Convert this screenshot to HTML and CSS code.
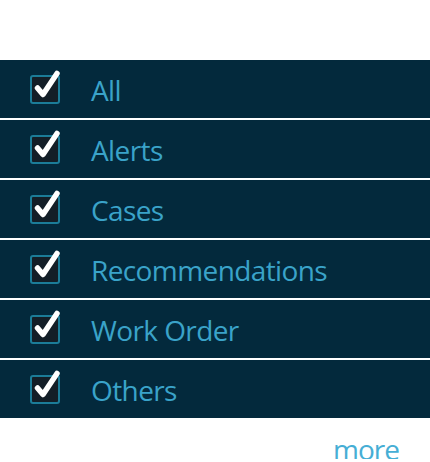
FILE: index.html
```html
<!DOCTYPE html>
<html>
<head>
<meta charset="utf-8">
<link rel="stylesheet" href="styles.css">
</head>
<body>
<div class="panel">
  <ul class="list">
    <li class="row"><span class="box"><svg viewBox="0 0 30 30" class="tick"><path d="M7.5 13 L13 19.5 L27 -1.5" /></svg></span><span class="label">All</span></li>
    <li class="row"><span class="box"><svg viewBox="0 0 30 30" class="tick"><path d="M7.5 13 L13 19.5 L27 -1.5" /></svg></span><span class="label">Alerts</span></li>
    <li class="row"><span class="box"><svg viewBox="0 0 30 30" class="tick"><path d="M7.5 13 L13 19.5 L27 -1.5" /></svg></span><span class="label">Cases</span></li>
    <li class="row"><span class="box"><svg viewBox="0 0 30 30" class="tick"><path d="M7.5 13 L13 19.5 L27 -1.5" /></svg></span><span class="label">Recommendations</span></li>
    <li class="row"><span class="box"><svg viewBox="0 0 30 30" class="tick"><path d="M7.5 13 L13 19.5 L27 -1.5" /></svg></span><span class="label">Work Order</span></li>
    <li class="row"><span class="box"><svg viewBox="0 0 30 30" class="tick"><path d="M7.5 13 L13 19.5 L27 -1.5" /></svg></span><span class="label">Others</span></li>
  </ul>
  <div class="footer"><a class="more">more</a></div>
</div>
</body>
</html>
```
FILE: styles.css
```css
html, body {
  margin: 0;
  padding: 0;
  background: #ffffff;
}
body {
  font-family: "Open Sans", "Noto Sans", sans-serif;
}
.panel {
  padding-top: 60px;
}
.list {
  list-style: none;
  margin: 0;
  padding: 0;
  display: flex;
  flex-direction: column;
  gap: 2px;
}
.row {
  height: 58px;
  background: #03293c;
  display: flex;
  align-items: center;
  padding-left: 30px;
}
.box {
  position: relative;
  box-sizing: border-box;
  width: 30px;
  height: 29px;
  border: 2px solid #1b7c98;
  border-radius: 3px;
  background: #131e27;
  margin-right: 31px;
}
.tick {
  position: absolute;
  left: -2px;
  top: -2px;
  width: 30px;
  height: 30px;
  overflow: visible;
  fill: none;
  stroke: #ffffff;
  stroke-width: 5.5;
  stroke-linecap: round;
  stroke-linejoin: round;
}
.label {
  color: #3aa3c9;
  font-size: 28px;
  letter-spacing: -0.6px;
  line-height: 1;
  margin-top: 2px;
}
.footer {
  display: flex;
  justify-content: flex-end;
  padding-right: 31px;
  padding-top: 21px;
}
.more {
  color: #46aed5;
  font-size: 28px;
  letter-spacing: -1px;
  line-height: 20px;
}
```
